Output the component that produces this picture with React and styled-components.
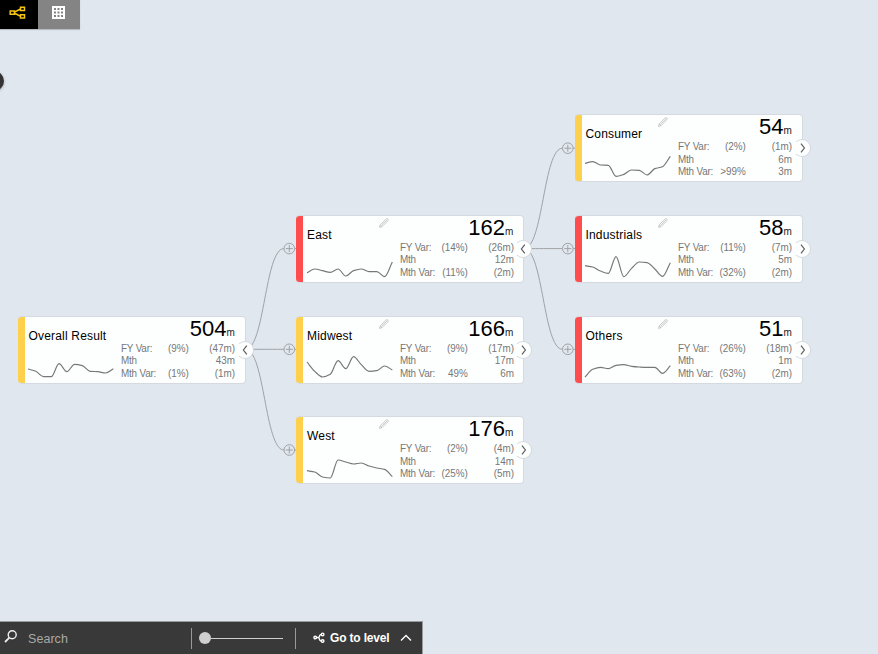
import React from "react";
import styled, { createGlobalStyle } from "styled-components";

const GlobalStyle = createGlobalStyle`
  * { box-sizing: border-box; }
  body { margin: 0; background: #e1e7ef; overflow: hidden; }
`;

const YELLOW = "#ffd04b";
const RED = "#ff4d4d";

const Page = styled.div`
  position: relative;
  display: flex;
  flex-direction: column;
  justify-content: space-between;
  align-items: flex-start;
  width: 878px;
  height: 654px;
  overflow: hidden;
  background: #e1e7ef;
  font-family: "Liberation Sans", Arial, sans-serif;
  color: #000;
`;

const ViewSwitch = styled.div`
  display: flex;
  height: 29px;
  box-shadow: 0 1px 1px rgba(0, 0, 0, 0.18);
`;

const ViewButton = styled.button`
  display: flex;
  justify-content: center;
  width: ${(p) => (p.$active ? 38 : 42)}px;
  height: 29px;
  padding: 6px 0 0;
  border: 0;
  background: ${(p) => (p.$active ? "#000" : "#848484")};
  svg { display: block; margin-left: ${(p) => (p.$active ? -3 : -1)}px; }
`;

const SideHandle = styled.div`
  position: absolute;
  left: -16px;
  top: 71px;
  width: 20px;
  height: 20px;
  border-radius: 50%;
  background: #343434;
  box-shadow: 0 1px 3px rgba(0, 0, 0, 0.25);
`;

const Canvas = styled.main`
  position: absolute;
  inset: 0;
`;

const Links = styled.svg`
  position: absolute;
  inset: 0;
  fill: none;
  stroke: #a0a2a5;
  stroke-width: 1;
`;

const Card = styled.article`
  position: absolute;
  left: ${(p) => p.$x}px;
  top: ${(p) => p.$y}px;
  display: flex;
  width: 228px;
  height: 68px;
  padding-left: 11px;
  border: 1px solid #d5dae0;
  border-left: 0;
  border-radius: 4px;
  background: linear-gradient(to right, ${(p) => p.$color} 6.5px, #fdfffe 6.5px);
`;

const Summary = styled.div`
  display: flex;
  flex: none;
  flex-direction: column;
  width: 92.6px;
`;

const Name = styled.div`
  flex: none;
  height: 39.8px;
  padding-top: 12px;
  font-size: 12px;
  line-height: 15px;
  letter-spacing: 0.18px;
  white-space: nowrap;
`;

const Spark = styled.svg`
  display: block;
  flex: none;
  width: 86px;
  height: 28px;
  margin-left: -0.5px;
  overflow: visible;
  fill: none;
  stroke: #777;
  stroke-width: 3.5;
`;

const Figures = styled.div`
  flex: none;
  width: 113.8px;
`;

const Total = styled.div`
  height: 24px;
  line-height: 24px;
  font-size: 22px;
  text-align: right;
  white-space: nowrap;
  small { font-size: 10px; color: #222; }
`;

const Metric = styled.div`
  display: grid;
  grid-template-columns: 42px 32px 1fr;
  width: 127px;
  height: 12.5px;
  line-height: 14px;
  font-size: 11px;
  color: #777;
  white-space: nowrap;
  transform: scaleX(0.898);
  transform-origin: 0 0;
  span + span { text-align: right; }
  span:first-child { letter-spacing: -0.2px; }
  span:nth-child(2) { margin-right: -1.5px; }
`;

const Pencil = styled.svg`
  position: absolute;
  left: 83px;
  top: 2px;
  fill: none;
  stroke: #b8b8b8;
  stroke-width: 0.75;
`;

const Toggle = styled.div`
  position: absolute;
  right: -9px;
  top: 24px;
  display: flex;
  width: 18px;
  height: 18px;
  border-radius: 50%;
  border: 1px solid #d5dae0;
  border-left-color: transparent;
  background: #fdfffe;
  svg {
    display: block;
    fill: none;
    stroke: #5c5c5c;
    stroke-width: 1.2;
  }
`;

const BottomBar = styled.footer`
  position: relative;
  display: flex;
  align-items: center;
  width: 423px;
  height: 33px;
  border-top: 1px solid #989b9e;
  border-right: 1px solid #989b9e;
  background: #383938;
  color: #fff;
`;

const Search = styled.label`
  display: flex;
  align-items: center;
  width: 191px;
  height: 22px;
  padding: 1px 0 0 4px;
  gap: 10px;
  color: #a9aaa9;
  font-size: 12.5px;
  letter-spacing: 0.05px;
  svg { position: relative; top: -1.5px; }
`;

const Divider = styled.div`
  width: 1px;
  height: 21px;
  background: #999;
`;

const Slider = styled.div`
  display: flex;
  align-items: center;
  width: 103px;
  padding-left: 7px;
`;

const Knob = styled.div`
  width: 12px;
  height: 12px;
  border-radius: 50%;
  background: #cfcfcf;
`;

const Track = styled.div`
  width: 72px;
  height: 1px;
  background: #cfcfcf;
`;

const LevelButton = styled.button`
  display: flex;
  align-items: center;
  height: 28px;
  padding: 0 0 1px 17px;
  border: 0;
  background: none;
  color: #fff;
  font: bold 12px "Liberation Sans", Arial, sans-serif;
  letter-spacing: -0.17px;
  span { margin: 0 10.5px 0 5px; white-space: nowrap; }
`;

const nodes = [
  { name: "Overall Result", x: 17.5, y: 315.5, color: YELLOW, total: "504", open: true, root: true,
    fy: ["(9%)", "(47m)"], mth: "43m", mv: ["(1%)", "(1m)"], trend: [39, 46, 62, 62, 23, 47, 25, 29, 46, 47, 51, 38] },
  { name: "East", x: 296, y: 214.8, color: RED, total: "162", open: true,
    fy: ["(14%)", "(26m)"], mth: "12m", mv: ["(11%)", "(2m)"], trend: [50, 39, 44, 49, 39, 60, 44, 39, 47, 47, 62, 18] },
  { name: "Midwest", x: 296, y: 315.5, color: YELLOW, total: "166",
    fy: ["(9%)", "(17m)"], mth: "17m", mv: ["49%", "6m"], trend: [18, 46, 63, 55, 14, 38, 2, 26, 46, 44, 30, 42] },
  { name: "West", x: 296, y: 416.2, color: YELLOW, total: "176",
    fy: ["(2%)", "(4m)"], mth: "14m", mv: ["(25%)", "(5m)"], trend: [41, 45, 60, 63, 9, 15, 21, 18, 27, 33, 37, 59] },
  { name: "Consumer", x: 574.5, y: 114.4, color: YELLOW, total: "54",
    fy: ["(2%)", "(1m)"], mth: "6m", mv: [">99%", "3m"], trend: [25, 20, 30, 31, 64, 58, 45, 46, 60, 41, 35, 4] },
  { name: "Industrials", x: 574.5, y: 214.8, color: RED, total: "58",
    fy: ["(11%)", "(7m)"], mth: "5m", mv: ["(32%)", "(2m)"], trend: [29, 33, 45, 52, 2, 62, 37, 18, 20, 39, 61, 20] },
  { name: "Others", x: 574.5, y: 315.5, color: RED, total: "51",
    fy: ["(26%)", "(18m)"], mth: "1m", mv: ["(63%)", "(2m)"], trend: [63, 40, 34, 38, 28, 26, 31, 33, 34, 34, 52, 29] },
];

const links = [[0, 1], [0, 2], [0, 3], [1, 4], [1, 5], [1, 6]];

// Monotone cubic through evenly spaced samples, so peaks never overshoot.
function trendPath(values) {
  const step = 256 / (values.length - 1);
  const d = values.slice(1).map((v, i) => v - values[i]);
  const m = values.map((_, i) => {
    if (i === 0) return d[0];
    if (i === values.length - 1) return d[i - 1];
    return d[i - 1] * d[i] <= 0 ? 0 : (2 * d[i - 1] * d[i]) / (d[i - 1] + d[i]);
  });
  return values
    .map((v, i) => {
      const x = i * step;
      if (i === 0) return `M0,${v}`;
      return `C${x - (2 * step) / 3},${values[i - 1] + m[i - 1] / 3} ${x - step / 3},${v - m[i] / 3} ${x},${v}`;
    })
    .join(" ");
}

function linkPath(from, to) {
  const x1 = from.x + 228, y1 = from.y + 33.8;
  const x2 = to.x - 12, y2 = to.y + 33.8;
  const mid = (x1 + x2) / 2;
  return `M${x1},${y1} C${mid},${y1} ${mid},${y2} ${x2},${y2}`;
}

function TreeNode({ node }) {
  return (
    <Card $x={node.x} $y={node.y} $color={node.color}>
      <Summary>
        <Name>{node.name}</Name>
        <Spark viewBox="0 0 258 84"><path d={trendPath(node.trend)} /></Spark>
      </Summary>
      <Figures>
        <Total>{node.total}<small>m</small></Total>
        <Metric><span>FY Var:</span><span>{node.fy[0]}</span><span>{node.fy[1]}</span></Metric>
        <Metric><span>Mth</span><span /><span>{node.mth}</span></Metric>
        <Metric><span>Mth Var:</span><span>{node.mv[0]}</span><span>{node.mv[1]}</span></Metric>
      </Figures>
      {!node.root && (
        <Pencil width="10" height="10" viewBox="0 0 10 10">
          <path d="M.5 9.4 1.2 6.9 7.1 1Q8 .2 8.9 1 9.6 1.9 8.9 2.8L3 8.7ZM1.2 6.9 3 8.7M2.4 7.5 7.9 2" />
        </Pencil>
      )}
      <Toggle>
        <svg width="16" height="16" viewBox="0 0 16 16">
          <path d={node.open ? "M9.8 3.6 6.4 8 9.8 12.4" : "M7 3.6 10.4 8 7 12.4"} />
        </svg>
      </Toggle>
    </Card>
  );
}

export default function App() {
  return (
    <>
      <GlobalStyle />
      <Page>
        <Canvas>
          <Links width="878" height="654">
            {links.map(([a, b]) => <path key={`${a}-${b}`} d={linkPath(nodes[a], nodes[b])} />)}
            {nodes.filter((n) => !n.root).map((n) => {
              const cx = n.x - 6.7, cy = n.y + 33.8;
              return (
                <g key={n.name}>
                  <circle cx={cx} cy={cy} r="5.3" fill="#e1e7ef" />
                  <path d={`M${cx - 3.5},${cy}h7M${cx},${cy - 3.5}v7M${cx + 5.3},${cy}h2`} />
                </g>
              );
            })}
          </Links>
          {nodes.map((n) => <TreeNode key={n.name} node={n} />)}
        </Canvas>
        <ViewSwitch>
          <ViewButton $active aria-label="Tree view">
            <svg width="17" height="14" viewBox="0 0 17 14" fill="none" stroke="#f3c512" strokeWidth="1.5">
              <path d="M1.2 4.9h4.2v3.3H1.2zM11.5 1.2h4v3.3h-4zM11.5 8.8h4v3.3h-4zM5.4 6.1 11.5 3M5.4 7 11.5 10.3" />
            </svg>
          </ViewButton>
          <ViewButton aria-label="Table view">
            <svg width="13" height="13" viewBox="0 0 13 13">
              <path fill="#fff" d="M0 0h13v13H0z" />
              <path fill="#848484" d="M2 2h2v2H2zM5.5 2h2v2h-2zM9 2h2v2H9zM2 5.5h2v2H2zM5.5 5.5h2v2h-2zM9 5.5h2v2H9zM2 9h2v2H2zM5.5 9h2v2h-2zM9 9h2v2H9z" />
            </svg>
          </ViewButton>
        </ViewSwitch>
        <SideHandle />
        <BottomBar>
          <Search>
            <svg width="14" height="14" viewBox="0 0 14 14" fill="none" stroke="#eee" strokeWidth="1.4">
              <circle cx="8.2" cy="4.8" r="4" /><path d="M5.4 7.7 1 12" strokeWidth="1.8" />
            </svg>
            Search
          </Search>
          <Divider />
          <Slider><Knob /><Track /></Slider>
          <Divider />
          <LevelButton>
            <svg width="12" height="12" viewBox="0 0 12 12" fill="none" stroke="#fff" strokeWidth="1.4">
              <circle cx="2.2" cy="5.5" r="1.3" /><circle cx="9.6" cy="2.4" r="1.3" /><circle cx="9.6" cy="9" r="1.3" />
              <path d="M3.6 5.5H5.2Q6 5.5 6.3 4.5 6.8 2.4 8.3 2.4M5.2 5.5Q6 5.5 6.3 6.8 6.8 9 8.3 9" />
            </svg>
            <span>Go to level</span>
            <svg width="12" height="8" viewBox="0 0 12 8" fill="none" stroke="#fff" strokeWidth="1.4"><path d="M1 6.5 6 1.5 11 6.5" /></svg>
          </LevelButton>
        </BottomBar>
      </Page>
    </>
  );
}
